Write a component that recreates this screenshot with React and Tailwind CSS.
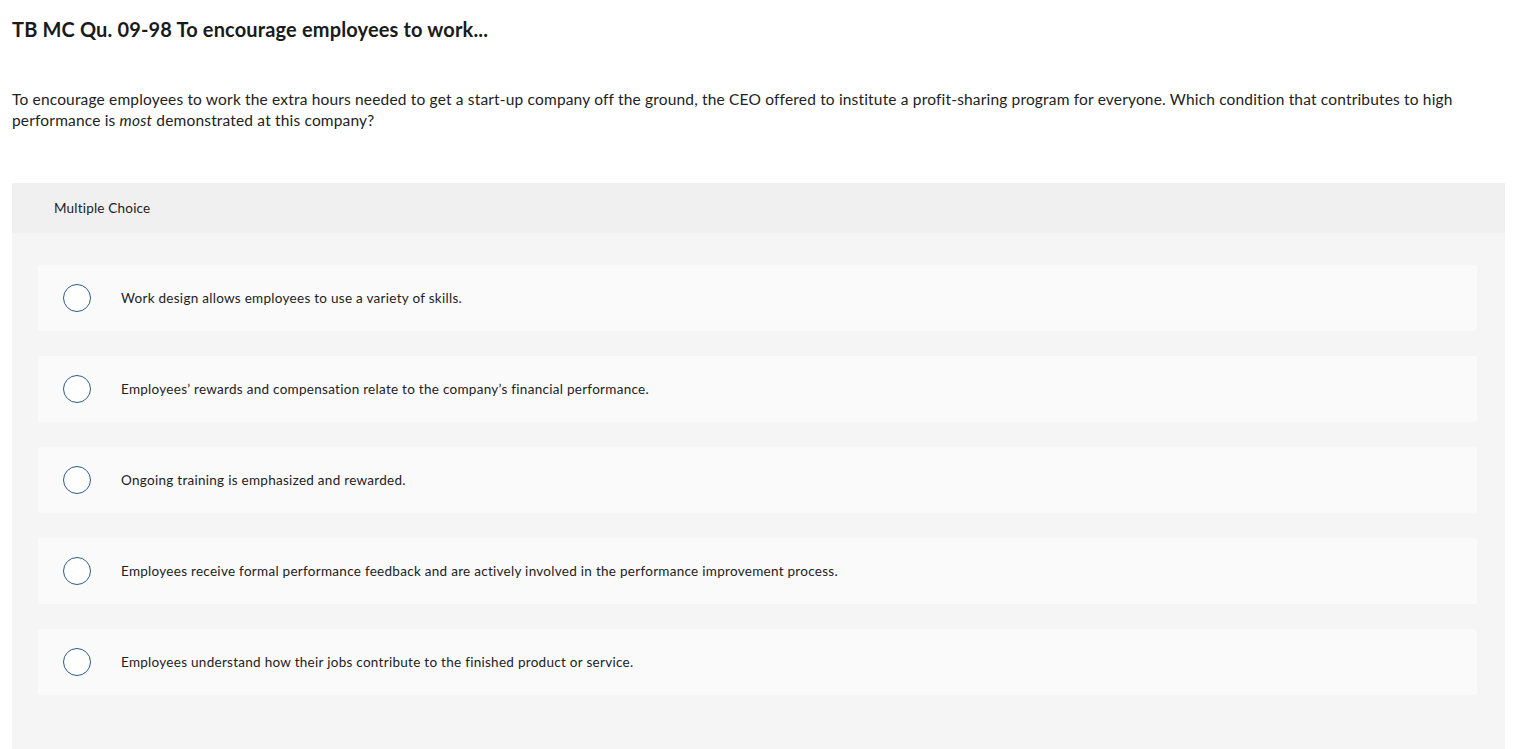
import React from 'react';

const options = [
  'Work design allows employees to use a variety of skills.',
  'Employees\u2019 rewards and compensation relate to the company\u2019s financial performance.',
  'Ongoing training is emphasized and rewarded.',
  'Employees receive formal performance feedback and are actively involved in the performance improvement process.',
  'Employees understand how their jobs contribute to the finished product or service.',
];

const App = () => {
  return (
    <div className="min-h-screen bg-white px-3 text-[#222] font-['Lato','Noto_Sans',sans-serif]">
      <h1 className="pt-[16px] text-[20px] leading-[26px] font-bold tracking-[0.15px] text-[#1a1a1a]">
        TB MC Qu. 09-98 To encourage employees to work...
      </h1>

      <p className="mt-[47px] text-[15.5px] leading-[21px] tracking-[0.17px] text-[#222]">
        To encourage employees to work the extra hours needed to get a start-up company off the ground, the CEO offered to institute a profit-sharing program for everyone. Which condition that contributes to high
        <br />
        performance is <em>most</em> demonstrated at this company?
      </p>

      <div className="mt-[52px] rounded-t-[2px] bg-[#f5f5f5]">
        <div className="flex h-[50px] items-center bg-[#f0f0f0] px-[42px] text-[13.5px] tracking-[0.2px] text-[#222]">
          Multiple Choice
        </div>
        <div className="flex flex-col gap-[25px] pl-[26px] pr-[28px] pt-[32px] pb-[54px]">
          {options.map((text, i) => (
            <label
              key={i}
              className="flex h-[66px] cursor-pointer items-center rounded-[3px] bg-[#fafafa] pl-[25px]"
            >
              <span className="h-[28px] w-[28px] shrink-0 rounded-full border-[1.5px] border-[#2b5d8c] bg-white" />
              <span className="ml-[30px] text-[13.5px] tracking-[0.28px] text-[#222]">{text}</span>
            </label>
          ))}
        </div>
      </div>
    </div>
  );
};

export default App;
